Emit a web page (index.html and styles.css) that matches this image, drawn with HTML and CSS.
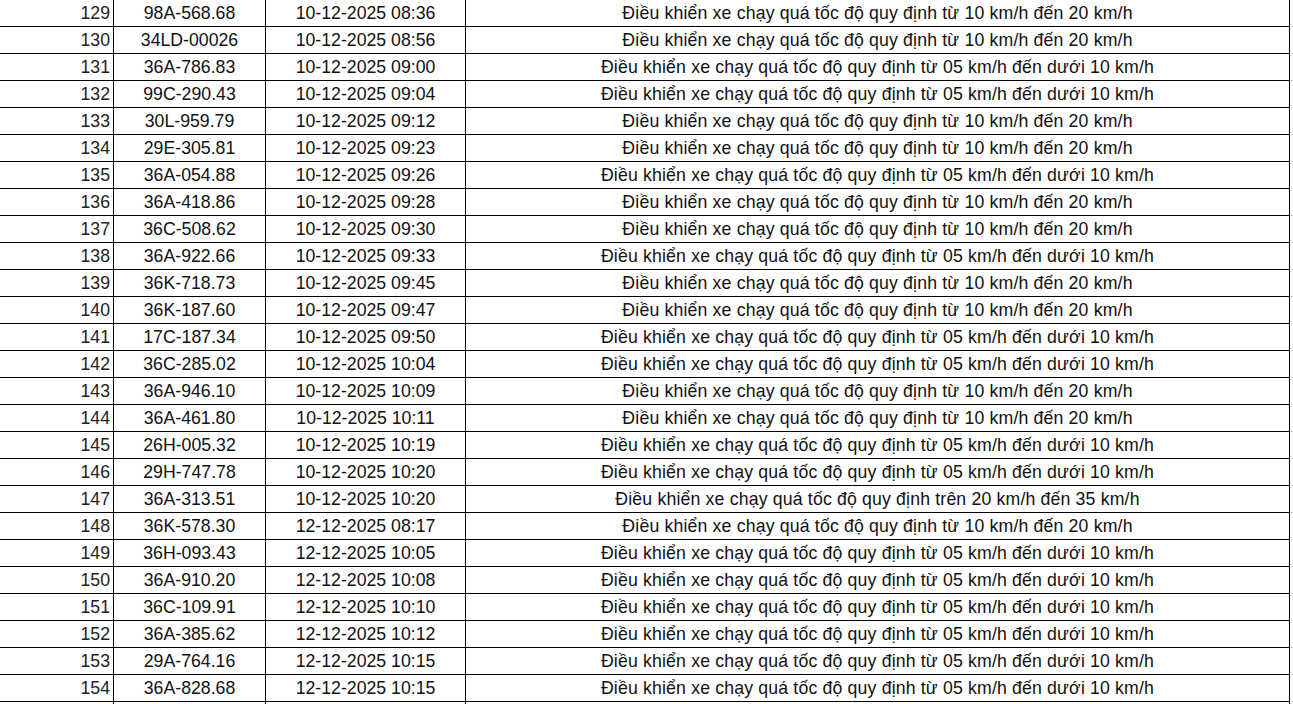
FILE: index.html
```html
<!DOCTYPE html>
<html lang="vi">
<head>
<meta charset="utf-8">
<title>Danh sách vi phạm</title>
<link rel="stylesheet" href="styles.css">
</head>
<body>
<div class="sheet">
  <div class="row"><div class="c n">129</div><div class="c">98A-568.68</div><div class="c">10-12-2025 08:36</div><div class="c d">Điều khiển xe chạy quá tốc độ quy định từ 10 km/h đến 20 km/h</div></div>
  <div class="row"><div class="c n">130</div><div class="c">34LD-00026</div><div class="c">10-12-2025 08:56</div><div class="c d">Điều khiển xe chạy quá tốc độ quy định từ 10 km/h đến 20 km/h</div></div>
  <div class="row"><div class="c n">131</div><div class="c">36A-786.83</div><div class="c">10-12-2025 09:00</div><div class="c d">Điều khiển xe chạy quá tốc độ quy định từ 05 km/h đến dưới 10 km/h</div></div>
  <div class="row"><div class="c n">132</div><div class="c">99C-290.43</div><div class="c">10-12-2025 09:04</div><div class="c d">Điều khiển xe chạy quá tốc độ quy định từ 05 km/h đến dưới 10 km/h</div></div>
  <div class="row"><div class="c n">133</div><div class="c">30L-959.79</div><div class="c">10-12-2025 09:12</div><div class="c d">Điều khiển xe chạy quá tốc độ quy định từ 10 km/h đến 20 km/h</div></div>
  <div class="row"><div class="c n">134</div><div class="c">29E-305.81</div><div class="c">10-12-2025 09:23</div><div class="c d">Điều khiển xe chạy quá tốc độ quy định từ 10 km/h đến 20 km/h</div></div>
  <div class="row"><div class="c n">135</div><div class="c">36A-054.88</div><div class="c">10-12-2025 09:26</div><div class="c d">Điều khiển xe chạy quá tốc độ quy định từ 05 km/h đến dưới 10 km/h</div></div>
  <div class="row"><div class="c n">136</div><div class="c">36A-418.86</div><div class="c">10-12-2025 09:28</div><div class="c d">Điều khiển xe chạy quá tốc độ quy định từ 10 km/h đến 20 km/h</div></div>
  <div class="row"><div class="c n">137</div><div class="c">36C-508.62</div><div class="c">10-12-2025 09:30</div><div class="c d">Điều khiển xe chạy quá tốc độ quy định từ 10 km/h đến 20 km/h</div></div>
  <div class="row"><div class="c n">138</div><div class="c">36A-922.66</div><div class="c">10-12-2025 09:33</div><div class="c d">Điều khiển xe chạy quá tốc độ quy định từ 05 km/h đến dưới 10 km/h</div></div>
  <div class="row"><div class="c n">139</div><div class="c">36K-718.73</div><div class="c">10-12-2025 09:45</div><div class="c d">Điều khiển xe chạy quá tốc độ quy định từ 10 km/h đến 20 km/h</div></div>
  <div class="row"><div class="c n">140</div><div class="c">36K-187.60</div><div class="c">10-12-2025 09:47</div><div class="c d">Điều khiển xe chạy quá tốc độ quy định từ 10 km/h đến 20 km/h</div></div>
  <div class="row"><div class="c n">141</div><div class="c">17C-187.34</div><div class="c">10-12-2025 09:50</div><div class="c d">Điều khiển xe chạy quá tốc độ quy định từ 05 km/h đến dưới 10 km/h</div></div>
  <div class="row"><div class="c n">142</div><div class="c">36C-285.02</div><div class="c">10-12-2025 10:04</div><div class="c d">Điều khiển xe chạy quá tốc độ quy định từ 05 km/h đến dưới 10 km/h</div></div>
  <div class="row"><div class="c n">143</div><div class="c">36A-946.10</div><div class="c">10-12-2025 10:09</div><div class="c d">Điều khiển xe chạy quá tốc độ quy định từ 10 km/h đến 20 km/h</div></div>
  <div class="row"><div class="c n">144</div><div class="c">36A-461.80</div><div class="c">10-12-2025 10:11</div><div class="c d">Điều khiển xe chạy quá tốc độ quy định từ 10 km/h đến 20 km/h</div></div>
  <div class="row"><div class="c n">145</div><div class="c">26H-005.32</div><div class="c">10-12-2025 10:19</div><div class="c d">Điều khiển xe chạy quá tốc độ quy định từ 05 km/h đến dưới 10 km/h</div></div>
  <div class="row"><div class="c n">146</div><div class="c">29H-747.78</div><div class="c">10-12-2025 10:20</div><div class="c d">Điều khiển xe chạy quá tốc độ quy định từ 05 km/h đến dưới 10 km/h</div></div>
  <div class="row"><div class="c n">147</div><div class="c">36A-313.51</div><div class="c">10-12-2025 10:20</div><div class="c d">Điều khiển xe chạy quá tốc độ quy định trên 20 km/h đến 35 km/h</div></div>
  <div class="row"><div class="c n">148</div><div class="c">36K-578.30</div><div class="c">12-12-2025 08:17</div><div class="c d">Điều khiển xe chạy quá tốc độ quy định từ 10 km/h đến 20 km/h</div></div>
  <div class="row"><div class="c n">149</div><div class="c">36H-093.43</div><div class="c">12-12-2025 10:05</div><div class="c d">Điều khiển xe chạy quá tốc độ quy định từ 05 km/h đến dưới 10 km/h</div></div>
  <div class="row"><div class="c n">150</div><div class="c">36A-910.20</div><div class="c">12-12-2025 10:08</div><div class="c d">Điều khiển xe chạy quá tốc độ quy định từ 05 km/h đến dưới 10 km/h</div></div>
  <div class="row"><div class="c n">151</div><div class="c">36C-109.91</div><div class="c">12-12-2025 10:10</div><div class="c d">Điều khiển xe chạy quá tốc độ quy định từ 05 km/h đến dưới 10 km/h</div></div>
  <div class="row"><div class="c n">152</div><div class="c">36A-385.62</div><div class="c">12-12-2025 10:12</div><div class="c d">Điều khiển xe chạy quá tốc độ quy định từ 05 km/h đến dưới 10 km/h</div></div>
  <div class="row"><div class="c n">153</div><div class="c">29A-764.16</div><div class="c">12-12-2025 10:15</div><div class="c d">Điều khiển xe chạy quá tốc độ quy định từ 05 km/h đến dưới 10 km/h</div></div>
  <div class="row"><div class="c n">154</div><div class="c">36A-828.68</div><div class="c">12-12-2025 10:15</div><div class="c d">Điều khiển xe chạy quá tốc độ quy định từ 05 km/h đến dưới 10 km/h</div></div>
  <div class="row"><div class="c n"></div><div class="c"></div><div class="c"></div><div class="c d"></div></div>
</div>
</body>
</html>
```
FILE: styles.css
```css
html, body {
  margin: 0;
  padding: 0;
  background: #ffffff;
  overflow: hidden;
}

.sheet {
  width: 1293px;
  font-family: "Liberation Sans", Arial, sans-serif;
  font-size: 17.7px;
  color: #111111;
}

.row {
  display: grid;
  grid-template-columns: 114px 152px 200px 824px 3px;
  height: 27px;
}

.row::after {
  content: "";
  border-bottom: 1px solid #d4d4d4;
  box-sizing: border-box;
  height: 27px;
}

.c {
  box-sizing: border-box;
  height: 27px;
  border-right: 1px solid #000000;
  border-bottom: 1px solid #000000;
  display: flex;
  align-items: center;
  justify-content: center;
  white-space: nowrap;
  line-height: 20px;
}

.d {
  letter-spacing: 0.16px;
}

.n {
  justify-content: flex-end;
  padding-right: 3px;
  color: #222222;
}
```
